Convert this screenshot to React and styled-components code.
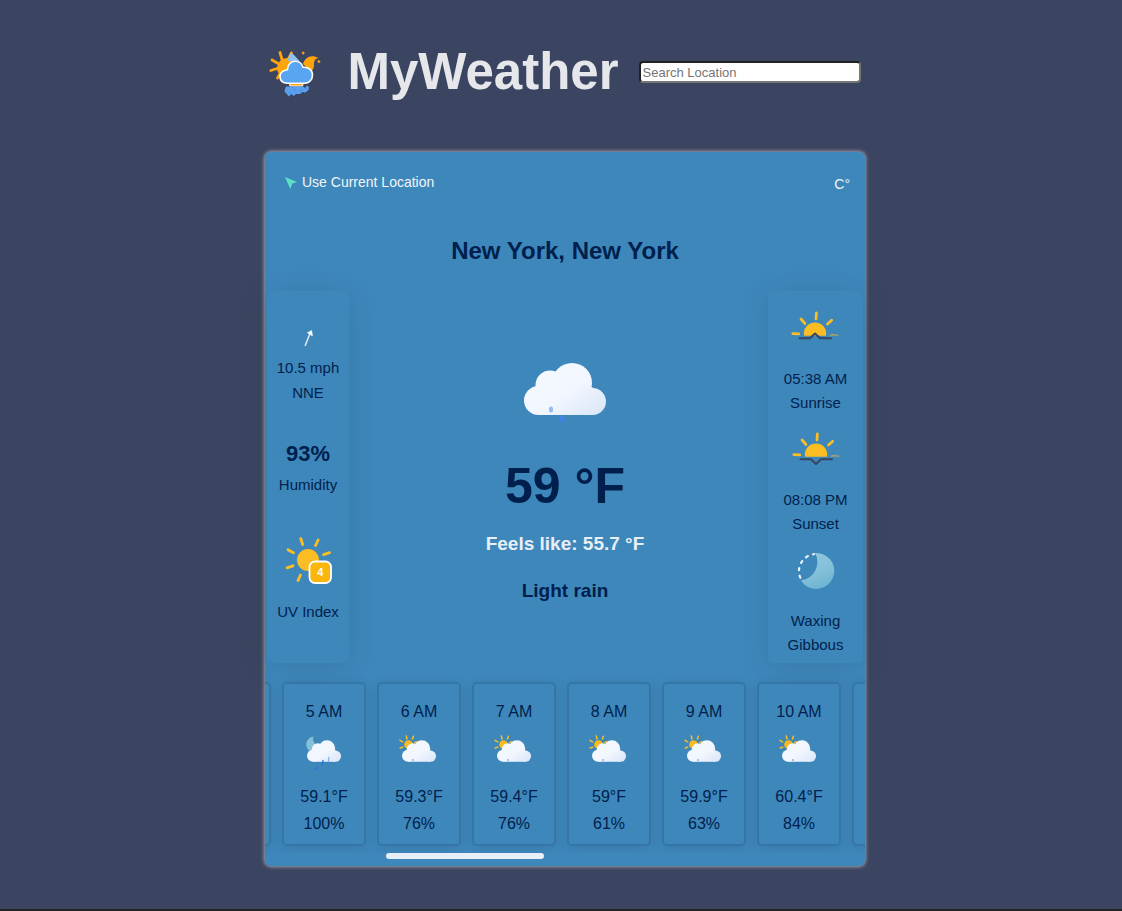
import React, { useLayoutEffect, useRef } from "react";
import styled, { createGlobalStyle } from "styled-components";

const GlobalStyle = createGlobalStyle`
  *, *::before, *::after { box-sizing: border-box; }
  body {
    margin: 0;
    background: #3b4561;
    color: #001f4d;
    font-family: "Liberation Sans", Arial, sans-serif;
    font-size: 16px;
  }
  h1, h2, h3, p { margin: 0; }
`;

const Page = styled.div`
  min-height: 100vh;
  padding: 42px 0 40px 8px;
  border-bottom: 2px solid #242424;
  display: flex;
  flex-direction: column;
  align-items: center;
`;

const Header = styled.header`
  display: flex;
  flex-wrap: wrap;
  align-items: center;
  justify-content: center;
  gap: 20px;
`;

const Brand = styled.div`
  display: flex;
  align-items: center;
  gap: 24px;
`;

const Title = styled.h1`
  color: #e5e7eb;
  font-size: 51px;
  line-height: 60px;
`;

const Search = styled.input`
  width: 222px;
  height: 22px;
  padding: 1px 2px;
  border: 2px inset #767676;
  border-radius: 4px;
  background: #fff;
  color: #222;
  font: 13px "Liberation Sans", Arial, sans-serif;
  &::placeholder { color: #757575; }
`;

const Card = styled.main`
  width: 100%;
  max-width: 600px;
  margin-top: 50px;
  border-radius: 6px;
  background: #3e87bb;
  box-shadow: 0 0 4px #d5ccd2;
`;

const Toolbar = styled.div`
  display: flex;
  justify-content: space-between;
  align-items: flex-start;
  padding: 20px 15px 0 20px;
`;

const TextButton = styled.button`
  display: flex;
  align-items: center;
  gap: 5px;
  padding: 0;
  border: 0;
  background: none;
  color: #f1f5f9;
  font: 14px "Liberation Sans", Arial, sans-serif;
  line-height: ${(p) => (p.$tall ? 24 : 20)}px;
  cursor: pointer;
`;

const City = styled.h2`
  margin: 40px 0 25px;
  font-size: 24px;
  line-height: 30px;
  text-align: center;
`;

const Current = styled.section`
  display: grid;
  grid-template-columns: 1fr auto 1fr;
  padding: 0 2px;
`;

const Panel = styled.aside`
  display: flex;
  flex-direction: column;
  align-items: center;
  justify-self: ${(p) => (p.$side === "left" ? "start" : "end")};
  width: ${(p) => (p.$side === "left" ? 82 : 95)}px;
  padding: ${(p) => (p.$side === "left" ? "30px 0 0" : "14px 0 6px")};
  gap: ${(p) => (p.$side === "left" ? 36 : 11)}px;
  border-radius: 6px;
  background: #3e87bb;
  box-shadow: 0 4px 30px rgba(0, 0, 0, 0.1);
  font-size: 15px;
  line-height: ${(p) => (p.$side === "left" ? 25 : 24)}px;
  text-align: center;
`;

const Fact = styled.div`
  display: flex;
  flex-direction: column;
  align-items: center;
  svg {
    display: block;
    margin-bottom: ${(p) => p.$gap || 0}px;
  }
`;

const Humidity = styled.strong`
  margin-bottom: 5px;
  font-size: 22px;
  line-height: 26px;
`;

const Center = styled.div`
  display: flex;
  flex-direction: column;
  align-items: center;
  padding-top: 71px;
  text-align: center;
`;

const Temperature = styled.h1`
  margin-top: 30px;
  font-size: 50px;
  line-height: 60px;
`;

const Note = styled.h3`
  margin-top: ${(p) => (p.$light ? 16 : 23)}px;
  color: ${(p) => (p.$light ? "#e8eef6" : "inherit")};
  font-size: 19px;
  line-height: 24px;
`;

const Strip = styled.section`
  display: flex;
  gap: 11px;
  padding: 19px 0 7px;
  overflow-x: auto;
  scrollbar-width: none;
  &::-webkit-scrollbar { display: none; }
`;

const HourCard = styled.article`
  display: flex;
  flex: 0 0 84px;
  flex-direction: column;
  align-items: center;
  height: 164px;
  padding: 14px 0 7px;
  border: 2px solid #3576a4;
  border-radius: 5px;
  background: #3e87bb;
  box-shadow: 0 2px 12px rgba(0, 0, 0, 0.1);
  line-height: 27px;
  svg {
    display: block;
    margin: 3px 0 7px;
  }
`;

const Track = styled.div`
  padding-bottom: 7px;
`;

const Thumb = styled.div`
  width: 158px;
  height: 6px;
  margin-left: 121px;
  border-radius: 3px;
  background: #e9eff8;
`;

function Cloud({ id, transform }) {
  return (
    <g transform={transform} fill={`url(#${id})`}>
      <defs>
        <linearGradient id={id} gradientUnits="userSpaceOnUse" x1="22" y1="4" x2="62" y2="60">
          <stop offset="0" stopColor="#f3f7fe" />
          <stop offset="0.5" stopColor="#f2f6fe" />
          <stop offset="1" stopColor="#dbe7f8" />
        </linearGradient>
      </defs>
      <circle cx="14.5" cy="37.5" r="14.5" />
      <circle cx="26" cy="22" r="14.5" />
      <circle cx="48" cy="20" r="20" />
      <circle cx="68.5" cy="38.5" r="13.5" />
      <rect x="14.5" y="24" width="54" height="28" />
    </g>
  );
}

const Logo = () => (
  <svg width="54" height="54" viewBox="0 -3 54 54" aria-hidden="true">
    <g stroke="#ffa40a" strokeWidth="2.8" strokeLinecap="round">
      <path d="M11 4.500l2 7M22.500 5l-3.500 7M3 12l7 4M1.800 22.500l8-2.500M8.500 30l3-5" />
    </g>
    <circle cx="18" cy="20" r="10" fill="#ffa40a" />
    <path d="M18 13l4-8.500 3 2.500 6 6.500z" fill="#8fc0f2" />
    <path d="M49.500 10c-3.500.5-4.700 3.500-4.500 6.500 0 3-1 5.500-3 7L34 16c1.500-6 8-10.500 15.500-6z" fill="#ffa40a" />
    <path d="M33 5l1.200-1.200L35.400 5l-1.200 1.200zM48.700 13.500l1.200-1.200 1.200 1.200-1.200 1.200z" fill="#ffa40a" stroke="#ffa40a" />
    <path d="M20 33h15l-1.500 5H21z" fill="#ffa40a" stroke="#fff" strokeWidth="1" />
    <path d="M17 38.500h17l2 1.500 2-2.500 2 1.500-.5 3-3 2.500-3-.5-2.500 2h-4l-2.500 2-2-2-3 2.500-2-3-2-1.500.5-3z" fill="#5aa0ee" />
    <path d="M20 44l1 1.500M25 41l1 2M31 42l1.500 1M36 40l1 1M23 39l.5 1" stroke="#3f82d6" strokeWidth="1" />
    <path d="M18.500 35.300c-5 0-7.500-3-7.500-6.500 0-4 3-6.500 7.500-7 0-5 3-8.500 7.500-8.500s7 2.500 8 6c5.500-.5 9.500 2.500 9.500 7.700 0 5-3.500 8.300-8 8.300z" fill="#5aa5f2" stroke="#fff" strokeWidth="1.600" strokeLinejoin="round" />
  </svg>
);

const LocateIcon = () => (
  <svg width="12" height="14" viewBox="0 0 12 14" aria-hidden="true">
    <path d="M0 2l12 5-4.700 1.600L5.300 14z" fill="#5ce0c6" />
  </svg>
);

const WindIcon = () => (
  <svg width="34" height="34" viewBox="0 0 34 34" aria-hidden="true">
    <path d="M14 25l5-12.500" stroke="#dfeaf5" strokeWidth="1.500" />
    <path d="M20.700 9.500l.8 5.500-5.200-3.300z" fill="#fff" stroke="#fff" strokeWidth="0.500" />
  </svg>
);

const UvIcon = () => (
  <svg width="52" height="52" viewBox="0 -1 52 52" role="img" aria-label="UV index 4">
    <circle cx="26" cy="26" r="11" fill="#fbbc24" />
    <path
      d="M18.700 4.500l2 6M36.200 6l-2.700 5.500M6 15.800l5.500 3M5 33.800l6-2M41.500 20.600l6-2M18.500 41l-2.500 5.500"
      stroke="#fbbf24" strokeWidth="2.800" strokeLinecap="round"
    />
    <rect x="27.500" y="27.500" width="21.500" height="21.500" rx="5.500" fill="#fab60a" stroke="#fff" strokeWidth="1.800" />
    <text x="38.200" y="42" fill="#fff" fontSize="11" fontWeight="bold" textAnchor="middle">4</text>
  </svg>
);

const HorizonIcon = ({ setting }) => (
  <svg width="48" height="48" viewBox="0 0 48 48" aria-hidden="true">
    <path d="M13 30.700a11.200 11.200 0 1 1 22 0z" fill="#fbbd22" />
    <path
      d="M1.800 28.600l6 .3M10 14l4 4.500M25.400 7.800L25 14M40.700 15.200L36.500 19"
      stroke="#fbbf24" strokeWidth="2.700" strokeLinecap="round"
    />
    <path d="M38.500 30.200l3-.9 6 .9z" stroke="#b9a85a" strokeWidth="0.600" fill="#b9a85a" />
    <path
      d={setting ? "M8.500 33.300H19l5 4.700 5-4.700h11" : "M8.500 33.300H19l5-4.700 5 4.700h11"}
      fill="none" stroke="#374660" strokeWidth="2" strokeLinecap="round" strokeLinejoin="round"
    />
  </svg>
);

const MoonPhaseIcon = () => (
  <svg width="48" height="48" viewBox="0 0 48 48" aria-hidden="true">
    <defs>
      <linearGradient id="phase" x1="0.300" y1="0" x2="0.700" y2="1">
        <stop offset="0" stopColor="#8fc6dc" />
        <stop offset="0.500" stopColor="#84c1da" />
        <stop offset="1" stopColor="#6bb3d0" />
      </linearGradient>
    </defs>
    <path d="M23 6A18 18 0 1 1 9 33.500A18.500 18.500 0 0 0 23 6z" fill="url(#phase)" />
    <path d="M22 7.200A17 17 0 0 0 9.500 33" fill="none" stroke="#eef4fb" strokeWidth="2.200" strokeDasharray="2 5.500" strokeDashoffset="1" strokeLinecap="round" />
  </svg>
);

const RainCloudIcon = () => (
  <svg width="82" height="64" viewBox="0 0 82 64" aria-hidden="true">
    <Cloud id="cloud-main" transform="translate(0 1)" />
    <ellipse cx="27" cy="47.500" rx="2" ry="3" fill="#93b9f5" />
    <ellipse cx="38" cy="57" rx="2" ry="3" fill="#3f83ee" />
  </svg>
);

const HourIcon = ({ hour, night }) => (
  <svg width="48" height="48" viewBox="0 0 48 48" aria-hidden="true">
    {night ? (
      <path d="M13.500 8.500C8 9.500 5.500 14 6.500 18.500c.8 3 3 5 6 5.500l6-6c-4-1.500-6.500-5.500-5-9.500z" fill="#84c0d8" />
    ) : (
      <g>
        <circle cx="13.500" cy="16.500" r="4.300" fill="#fbb91f" />
        <path
          d="M11.300 8l.7 3M18.400 8.300l-1 2.700M5 12.400l2.600 1.400M5.200 20l2.600-.9M19.800 14.500l2.200-.8"
          stroke="#fbbf24" strokeWidth="1.500" strokeLinecap="round"
        />
      </g>
    )}
    <Cloud id={`cloud-${hour}`} transform="translate(7 12.200) scale(0.415)" />
    {night ? (
      <g strokeWidth="1.300" strokeLinecap="round">
        <path d="M28.800 29.500l-.4 4" stroke="#8aaeea" />
        <path d="M23 32.500l-.8 4M16.800 39.500l-.7 2" stroke="#2f6fd6" />
      </g>
    ) : (
      <g fill="#3a7de0">
        <rect x="17.300" y="31" width="1.400" height="2" fill="#86aeea" />
        <rect x="22.200" y="36" width="1.600" height="1.200" />
        <rect x="27" y="40" width="1.200" height="1" />
      </g>
    )}
  </svg>
);

const HOURS = [
  { hour: 5, temp: "59.1°F", rain: "100%", night: true },
  { hour: 6, temp: "59.3°F", rain: "76%" },
  { hour: 7, temp: "59.4°F", rain: "76%" },
  { hour: 8, temp: "59°F", rain: "61%" },
  { hour: 9, temp: "59.9°F", rain: "63%" },
  { hour: 10, temp: "60.4°F", rain: "84%" },
];

export default function App() {
  const strip = useRef(null);
  useLayoutEffect(() => {
    strip.current.scrollLeft = 78;
  }, []);

  return (
    <>
      <GlobalStyle />
      <Page>
        <Header>
          <Brand>
            <Logo />
            <Title>MyWeather</Title>
          </Brand>
          <Search type="text" placeholder="Search Location" aria-label="Search Location" />
        </Header>

        <Card>
          <Toolbar>
            <TextButton type="button">
              <LocateIcon />
              Use Current Location
            </TextButton>
            <TextButton type="button" $tall>C°</TextButton>
          </Toolbar>
          <City>New York, New York</City>

          <Current>
            <Panel $side="left">
              <Fact>
                <WindIcon />
                <span>10.5 mph</span>
                <span>NNE</span>
              </Fact>
              <Fact>
                <Humidity>93%</Humidity>
                <span>Humidity</span>
              </Fact>
              <Fact $gap={14}>
                <UvIcon />
                <span>UV Index</span>
              </Fact>
            </Panel>

            <Center>
              <RainCloudIcon />
              <Temperature>59 °F</Temperature>
              <Note $light>Feels like: 55.7 °F</Note>
              <Note>Light rain</Note>
            </Center>

            <Panel $side="right">
              <Fact $gap={14}>
                <HorizonIcon />
                <span>05:38 AM</span>
                <span>Sunrise</span>
              </Fact>
              <Fact $gap={14}>
                <HorizonIcon setting />
                <span>08:08 PM</span>
                <span>Sunset</span>
              </Fact>
              <Fact $gap={14}>
                <MoonPhaseIcon />
                <span>Waxing</span>
                <span>Gibbous</span>
              </Fact>
            </Panel>
          </Current>

          <Strip ref={strip}>
            <HourCard aria-hidden="true" />
            {HOURS.map((h) => (
              <HourCard key={h.hour}>
                <span>{h.hour} AM</span>
                <HourIcon hour={h.hour} night={h.night} />
                <span>{h.temp}</span>
                <span>{h.rain}</span>
              </HourCard>
            ))}
            <HourCard aria-hidden="true" />
          </Strip>
          <Track>
            <Thumb />
          </Track>
        </Card>
      </Page>
    </>
  );
}
